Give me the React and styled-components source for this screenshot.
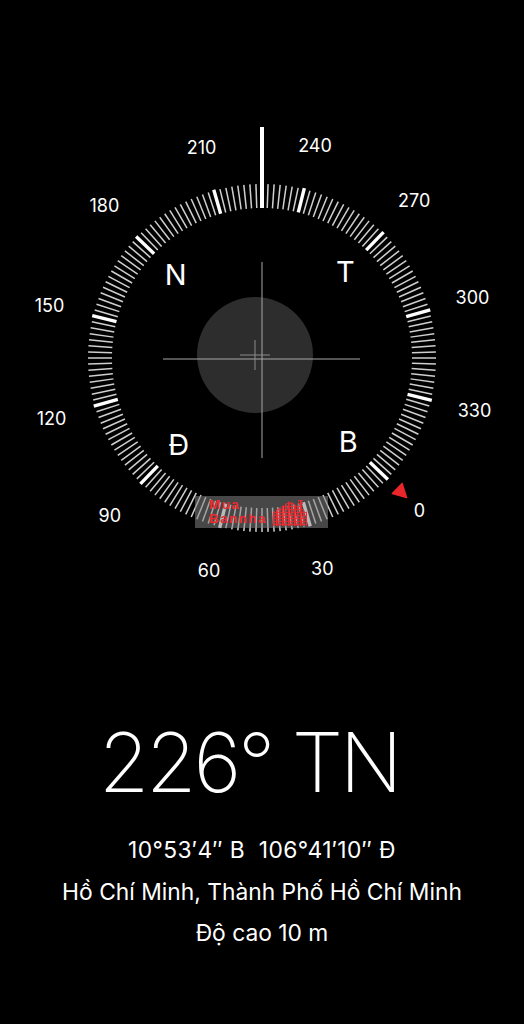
import React from "react";
import styled, { createGlobalStyle } from "styled-components";

const GlobalStyle = createGlobalStyle`
  html, body {
    margin: 0;
    padding: 0;
    background: #000;
  }
  body {
    font-family: Inter, "Noto Sans", "DejaVu Sans", sans-serif;
    color: #fff;
  }
`;

const HEADING = 226;
const CX = 262;
const CY = 358;

const Page = styled.main`
  width: 524px;
  height: 1024px;
  background: #000;
  display: flex;
  flex-direction: column;
  align-items: center;
  overflow: hidden;
`;

const CompassArea = styled.section`
  position: relative;
  width: 524px;
  height: 640px;
`;

const Dial = styled.svg`
  display: block;
  width: 524px;
  height: 640px;
  text {
    font-family: Inter, "Noto Sans", sans-serif;
    fill: #fff;
  }
`;

const Watermark = styled.div`
  position: absolute;
  left: 195px;
  top: 496px;
  width: 133px;
  height: 32px;
  background: rgba(130, 130, 130, 0.55);
  display: flex;
  align-items: center;
  padding-left: 14px;
  box-sizing: border-box;
  gap: 3px;
`;

Watermark.Text = styled.div`
  font-family: "Liberation Sans", Arial, sans-serif;
  font-weight: bold;
  font-size: 13.5px;
  line-height: 14px;
  letter-spacing: 1.4px;
  color: #ee2a2f;
`;

const Heading = styled.h1`
  margin: 82px 0 0;
  padding-right: 26px;
  font-size: 82px;
  line-height: 1;
  font-weight: 200;
  letter-spacing: -3.3px;
  text-align: center;
`;

const Info = styled.div`
  margin-top: 25px;
  display: flex;
  flex-direction: column;
  align-items: center;
`;

const InfoLine = styled.p`
  margin: 0;
  font-size: 22.8px;
  line-height: 41.5px;
  font-weight: 400;
  letter-spacing: ${({ $wide }) => ($wide ? "0.4px" : "0")};
  white-space: pre;
`;

const polar = (deg, r) => {
  const a = ((deg - HEADING) * Math.PI) / 180;
  return [CX + r * Math.sin(a), CY - r * Math.cos(a)];
};

const ticks = Array.from({ length: 180 }, (_, i) => i * 2);
const labels = [0, 30, 60, 90, 120, 150, 180, 210, 240, 270, 300, 330];
const cardinals = [
  { d: 0, t: "B" },
  { d: 90, t: "Đ" },
  { d: 180, t: "N" },
  { d: 270, t: "T" },
];

// striped little house from the watermark logo
const House = () => (
  <svg width="40" height="30" viewBox="0 0 40 30">
    <defs>
      <pattern id="stripes" width="3" height="3" patternUnits="userSpaceOnUse">
        <rect width="1.6" height="3" fill="#ee2a2f" />
        <rect width="3" height="0.8" fill="#ee2a2f" />
      </pattern>
    </defs>
    <path d="M3 15 L20 4 L37 15 L37 29 L3 29 Z" fill="url(#stripes)" />
    <rect x="28" y="3" width="5" height="9" fill="url(#stripes)" />
  </svg>
);

export default function App() {
  return (
    <Page>
      <GlobalStyle />
      <CompassArea>
        <Dial viewBox="0 0 524 640">
          <circle cx={255} cy={355} r={58} fill="#2d2d2d" />
          <line x1={CX} y1={262} x2={CX} y2={458} stroke="#a8a8a8" strokeWidth="1" />
          <line x1={163} y1={359} x2={360} y2={359} stroke="#a8a8a8" strokeWidth="1" />
          <line x1={240} y1={355} x2={270} y2={355} stroke="#8c8c8c" strokeWidth="1" />
          <line x1={255} y1={340} x2={255} y2={370} stroke="#8c8c8c" strokeWidth="1" />

          {ticks.map((d) => {
            const major = d % 30 === 0;
            const [x1, y1] = polar(d, 150);
            const [x2, y2] = polar(d, major ? 175 : 174);
            return (
              <line
                key={d}
                x1={x1}
                y1={y1}
                x2={x2}
                y2={y2}
                stroke={major ? "#fff" : "#cfcfcf"}
                strokeWidth={major ? 3.4 : 1.5}
              />
            );
          })}

          <line x1={CX} y1={127} x2={CX} y2={208} stroke="#fff" strokeWidth="4" />

          <g transform={`translate(${CX} ${CY}) rotate(${-HEADING})`}>
            <path d="M-7 -188 L7 -188 L0 -201 Z" fill="#e8262b" strokeLinejoin="round" stroke="#e8262b" strokeWidth="1.5" />
          </g>

          {labels.map((d) => {
            const [x, y] = polar(d, 219);
            return (
              <text key={d} x={x} y={y} fontSize="18" textAnchor="middle" dominantBaseline="central">
                {d}
              </text>
            );
          })}

          {cardinals.map(({ d, t }) => {
            const [x, y] = polar(d, 120);
            return (
              <text key={t} x={x} y={y} fontSize="29" textAnchor="middle" dominantBaseline="central">
                {t}
              </text>
            );
          })}
        </Dial>
        <Watermark>
          <Watermark.Text>
            Mua
            <br />
            Bannha
          </Watermark.Text>
          <House />
        </Watermark>
      </CompassArea>
      <Heading>226° TN</Heading>
      <Info>
        <InfoLine $wide>10°53′4″ B  106°41′10″ Đ</InfoLine>
        <InfoLine>Hồ Chí Minh, Thành Phố Hồ Chí Minh</InfoLine>
        <InfoLine>Độ cao 10 m</InfoLine>
      </Info>
    </Page>
  );
}
